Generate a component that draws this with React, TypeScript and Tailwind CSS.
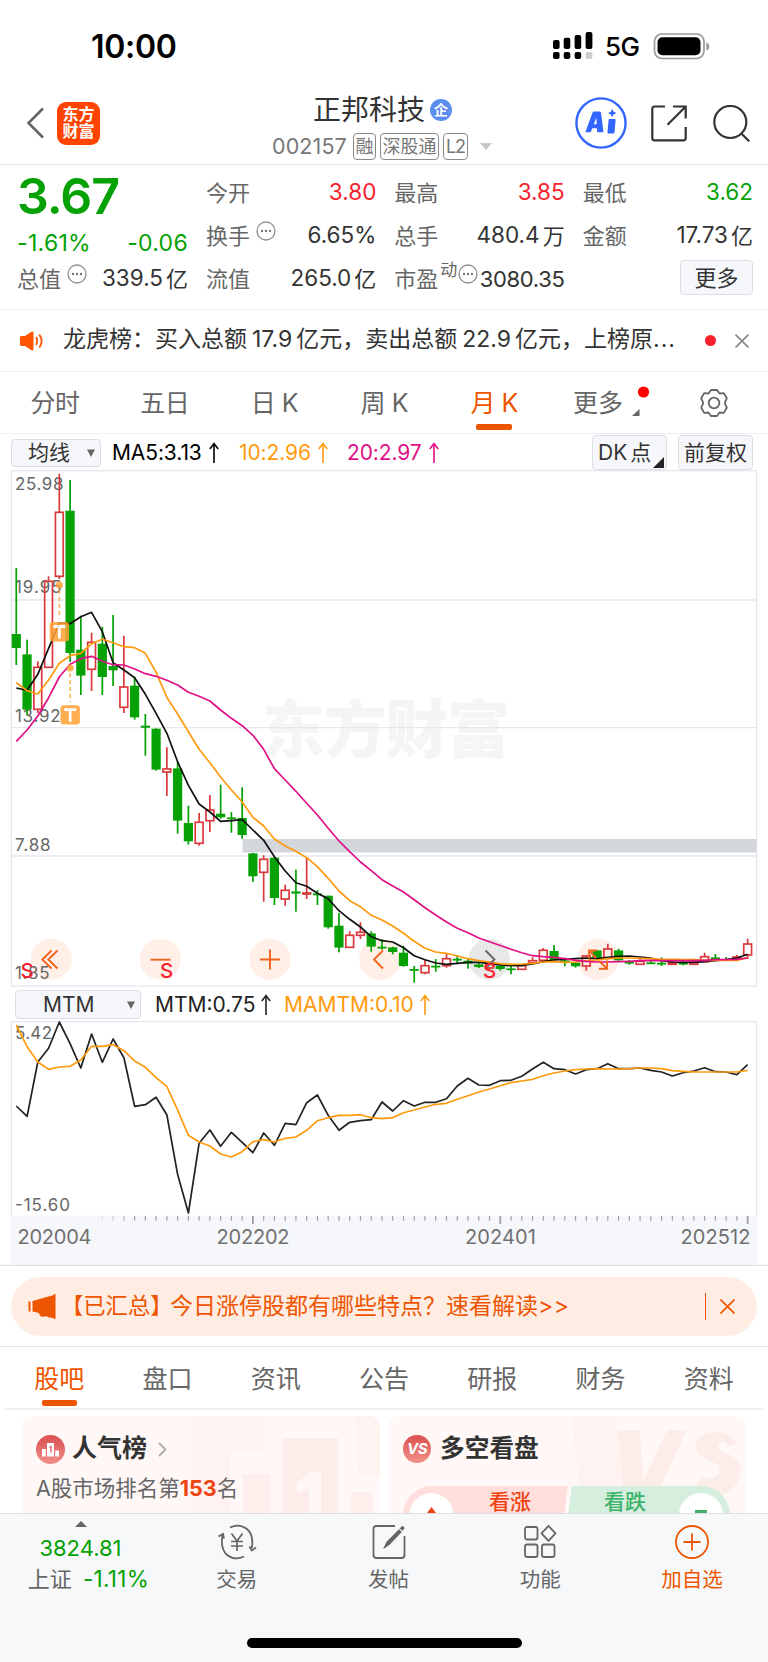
import { ReactNode } from 'react';

const STEP = 10.755;
const X0 = 16.3;
const px = (i: number) => X0 + STEP * i;

// [up, high, body top, body bottom, low]
const candles: [number, number, number, number, number][] = [
  [0, 568, 634.3, 647.7, 665], [0, 639.7, 654.7, 709.3, 715], [1, 661.3, 667.3, 709.3, 713], [1, 576.3, 581.3, 667.3, 667.3],
  [1, 473.7, 512.3, 576.3, 579], [0, 480, 511, 652.7, 662], [0, 615.7, 650, 675.3, 695], [1, 632.7, 642.3, 669.3, 691],
  [0, 626.7, 644, 676.7, 695], [0, 615, 666.3, 670, 686], [1, 635.7, 687, 707.3, 713], [0, 676.7, 686, 717, 719.7],
  [0, 714, 726, 727.5, 755.7], [0, 728.3, 729, 769.3, 770.7], [1, 747.3, 769, 772, 796], [0, 762, 768.7, 820.3, 833.7],
  [0, 805.7, 823.3, 841, 844.7], [1, 813, 822.3, 843.3, 845.7], [1, 795, 810, 820.7, 832], [0, 784.7, 814, 817, 818.7],
  [0, 812, 817.7, 818.7, 832.7], [0, 787.3, 818.3, 834.7, 838.7], [0, 853, 853.7, 876, 882], [1, 855.3, 859.3, 872.3, 901.7],
  [0, 856.7, 858, 897.7, 905], [1, 884.7, 890.3, 899, 905.7], [0, 869.7, 891.7, 893.3, 911.7], [1, 857.7, 893, 894, 899],
  [0, 890, 893.7, 895, 905], [0, 895.7, 896, 927, 928.7], [0, 913, 926, 947.3, 952.3], [1, 931.3, 935.3, 947.3, 947.3],
  [1, 922.3, 932.3, 935.3, 939], [0, 931.3, 933.7, 946.3, 951.7], [0, 939.3, 947, 948, 949.7], [0, 946.7, 947.7, 951.7, 954.3],
  [0, 945.7, 953, 965.7, 966.7], [0, 966, 969.3, 970.3, 982.7], [1, 959.7, 965.7, 972.7, 974.3], [0, 959, 966, 967, 971.7],
  [1, 953.3, 958.7, 965.7, 967.7], [0, 955, 959, 960.3, 963.3], [0, 958.5, 961, 963.3, 968.7], [0, 963, 964.7, 966.7, 968],
  [1, 961.7, 964, 968, 968.7], [0, 964.3, 966, 968.7, 970.7], [0, 966, 968.7, 969.7, 974.3], [1, 964.7, 965.7, 969.3, 970],
  [1, 957.3, 960.7, 963, 964], [1, 948, 950.3, 960.3, 961], [0, 945, 951.3, 959.7, 960.3], [0, 957.7, 960.7, 962, 966.3],
  [0, 962, 963, 966, 967.7], [1, 955.5, 956, 966, 970.7], [0, 950, 950.7, 958.7, 959.3], [1, 943.7, 949, 958, 959.3],
  [0, 948.7, 950.7, 960, 960.7], [0, 960, 962, 963.3, 964.7], [1, 958, 961.3, 964.3, 965], [0, 960.7, 962.7, 963.7, 964],
  [0, 957.3, 963, 964.3, 966], [1, 961, 962.7, 964.3, 964.3], [0, 961.3, 962.7, 964.3, 965.3], [1, 958.7, 962.3, 964.3, 964.3],
  [1, 952.7, 956.7, 961.7, 962], [0, 954, 957.7, 959, 960], [0, 957, 959.3, 960.7, 961], [1, 955, 957, 958.7, 960],
  [1, 938.7, 944, 955, 959],
];

const ma5 = [688, 690.3, 674.3, 648.3, 623, 623.7, 616.7, 612.3, 631.7, 662.7, 670, 677.7, 694.3, 713.3, 733.3, 761.7, 785.3, 804, 812, 821.3, 820.7, 819.7, 830, 840.3, 856.7, 871, 882.7, 886.3, 893.3, 898.7, 910.7, 919.3, 927, 936.7, 940.7, 942, 947.7, 955.7, 959.7, 963, 964.3, 963.3, 962.3, 962.3, 963.3, 965, 965.7, 965.3, 964, 961.7, 960, 959.3, 958.7, 958, 958.7, 957.3, 956.3, 956, 957, 958, 960.7, 962, 962.3, 962.3, 961.7, 960.7, 959.7, 958, 954.3];
const ma10 = [682.7, 690.7, 694, 680, 663.3, 655.7, 653.3, 643.7, 639.3, 642.7, 646.7, 647.7, 653.3, 672.3, 697.5, 714, 731.7, 749.3, 762.7, 777, 790, 802, 817.3, 826, 839, 846, 851.3, 857.7, 866.7, 878.3, 891, 900.7, 906.7, 915.3, 920, 926, 933.3, 941.3, 948.3, 952, 953.3, 956, 958.7, 960.7, 962, 963.7, 964.3, 964, 963.3, 962, 961.7, 962.3, 962, 960.7, 960, 958.7, 958, 958, 958.3, 958.7, 959.3, 959.3, 959.7, 959.7, 960.3, 960.3, 960.3, 960.3, 957.7];
const ma20 = [741.3, 730, 716, 697.7, 677, 664.3, 658.7, 656.3, 661.3, 664.7, 665, 669, 673.7, 676.3, 680.3, 685, 692.3, 696.3, 701, 710, 718.3, 725.7, 735.3, 749.3, 768.7, 780, 791.3, 803.3, 815, 828.3, 841, 851.7, 862, 870.7, 879.7, 886, 892, 899.7, 907.7, 915, 922, 928.3, 932.7, 938, 941.7, 945.5, 949.3, 952.7, 955.7, 956.7, 957.3, 958.7, 960.3, 961.3, 962, 962, 961.7, 961.3, 960.7, 960.3, 960.7, 960.7, 960.7, 960.7, 960.3, 959.7, 959.7, 959.3, 958];
const mtm = [1106, 1116.3, 1062, 1048.3, 1022, 1043.7, 1068, 1034, 1062.3, 1039, 1057.7, 1106.3, 1104.7, 1097.3, 1115, 1174.3, 1213, 1143.3, 1130, 1146.3, 1132.3, 1142.3, 1152.7, 1133, 1145.3, 1123.3, 1124.7, 1102.7, 1095, 1115.3, 1130.3, 1122.3, 1120.7, 1119.7, 1102, 1111, 1100.7, 1106, 1102.3, 1102.3, 1098.7, 1086, 1078.3, 1085, 1085.3, 1080.7, 1080.3, 1076.3, 1069, 1062.3, 1068.7, 1069.7, 1074, 1069.7, 1068.7, 1063.7, 1068.7, 1068.7, 1068, 1070.3, 1072, 1076, 1072.7, 1071, 1067.7, 1071.7, 1072, 1074.7, 1064.7];
const mamtm = [1025, 1046.7, 1062, 1069.3, 1067, 1066.3, 1060, 1046.3, 1046.3, 1044.7, 1050.7, 1061, 1067.3, 1077.7, 1086.7, 1110, 1135.3, 1142, 1146, 1154, 1157, 1151.7, 1141.7, 1139.7, 1142, 1138.3, 1137, 1130.3, 1120.7, 1117.7, 1115.3, 1115.3, 1114.7, 1117.7, 1118.7, 1117.7, 1112.7, 1110, 1107, 1104.3, 1103.3, 1099.3, 1095.7, 1092, 1089, 1085.7, 1082.7, 1081, 1079.3, 1075.7, 1073, 1071, 1069.7, 1069, 1068.7, 1069, 1069, 1068.7, 1068, 1068, 1068.7, 1070.7, 1071.3, 1072, 1072, 1072, 1072, 1072, 1070.3];

const Line = ({ data, color }: { data: number[]; color: string }) => (
  <polyline points={data.map((y, i) => `${px(i).toFixed(1)},${y}`).join(' ')} fill="none" stroke={color} strokeWidth="1.7" strokeLinejoin="round" />
);

const Candle = ({ i, c }: { i: number; c: [number, number, number, number, number] }) => {
  const [up, high, top, bottom, low] = c;
  const x = px(i);
  if (up) {
    const h = Math.max(bottom - top, 1);
    return (
      <g stroke="#d93a3d" strokeWidth="1.7" fill="none">
        <path d={`M${x} ${high}V${top}M${x} ${bottom}V${low}`} />
        <rect x={x - 3.9} y={top} width="7.8" height={h} />
      </g>
    );
  }
  return (
    <g fill="#05a105">
      <rect x={x - 0.85} y={high} width="1.7" height={low - high} />
      <rect x={x - 4.6} y={top - 0.3} width="9.2" height={Math.max(bottom - top + 0.6, 1.8)} />
    </g>
  );
};

const TradeMark = ({ x, y, from }: { x: number; y: number; from: number }) => (
  <g opacity="0.85">
    <circle cx={x} cy={from} r="3.5" fill="#ffa032" />
    <path d={`M${x} ${from + 5}V${y - 13}`} stroke="#ffa032" strokeWidth="1.5" strokeDasharray="4 3" />
    <rect x={x - 9.7} y={y - 9.7} width="19.4" height="19.4" rx="3" fill="#ffa032" />
    <path d={`M${x - 6} ${y - 5.2}h12M${x} ${y - 5.2}v12`} stroke="#fff" strokeWidth="2.8" />
  </g>
);

const KLineChart = () => (
  <svg width="768" height="517" viewBox="0 470 768 517" className="block shrink-0">
    <text x="262" y="752" textLength="248" fontSize="63" fontWeight="900" fill="#f5f5f6">东方财富</text>
    <g stroke="#e6e7ee" strokeWidth="1.3" fill="none">
      <rect x="11.4" y="470.7" width="745.2" height="515.3" />
      <path d="M11 600H757M11 727.7H757M11 856H757" />
    </g>
    <rect x="242.5" y="839" width="514" height="13.5" fill="#d3d7dc" />
    <g fill="#ffefe6">
      <circle cx="51.3" cy="959.3" r="20.6" />
      <circle cx="160.3" cy="959.3" r="20.6" />
      <circle cx="270" cy="959.3" r="20.6" />
      <circle cx="379.7" cy="959.3" r="20.6" />
      <circle cx="489.3" cy="959.3" r="20.6" fill="#e8e8e8" />
      <circle cx="598" cy="959.3" r="20.6" />
    </g>
    <g fontSize="17" fill="#666">
      <text x="15" y="490" textLength="48.5">25.98</text>
      <text x="15" y="593.4" textLength="46.5">19.95</text>
      <text x="15" y="722" textLength="45.5">13.92</text>
      <text x="15" y="850.8" textLength="35.5">7.88</text>
      <text x="15" y="979.3" textLength="34.5">1.85</text>
    </g>
    {candles.map((c, i) => <Candle key={i} i={i} c={c} />)}
    <Line data={ma5} color="#111" />
    <Line data={ma10} color="#ff9a0d" />
    <Line data={ma20} color="#e01087" />
    <TradeMark x={59.4} y={631.7} from={585} />
    <TradeMark x={70.2} y={714.9} from={668} />
    <g fill="none" stroke="#f0641e" strokeWidth="1.9">
      <path d="M51.5 950.5L42.3 959.5L51.5 968.5M57.5 950.5L48.3 959.5L57.5 968.5" />
      <path d="M150.5 959.7H170.5" />
      <path d="M260 959.5H280M270 949.5V969.5" />
      <path d="M383 950.5L374 959.5L383 968.5" />
      <path d="M485.5 950.5L494.5 959.5L485.5 968.5" stroke="#666" />
      <path d="M589 958.5V950.5H597M589.5 951L596 958M599 961L607 968.5M599 968.7H607V960.5" />
    </g>
    <g fontSize="20.5" fontWeight="500" fill="#f5222d">
      <text x="20.4" y="977.8">S</text>
      <text x="160" y="977.8">S</text>
      <text x="483" y="977.8">S</text>
    </g>
  </svg>
);

const MtmChart = () => (
  <svg width="768" height="245" viewBox="0 1021 768 245" className="block shrink-0">
    <path d="M11 1215.7H757V1265H11z" fill="#f6f7fa" />
    <path d="M11.4 1216V1021.6H756.6V1216" stroke="#e6e7ee" strokeWidth="1.3" fill="none" />
    <path d="M0 1265.3H768" stroke="#e3e3e6" strokeWidth="1.2" />
    {candles.map((_, i) => i > 7 && (
      <path
        key={i}
        d={`M${px(i)} 1216V${[22, 45, 68].includes(i) ? 1224 : 1220.8}`}
        stroke="#a0a0a3"
        strokeWidth={[22, 45, 68].includes(i) ? 1.8 : 1.2}
        opacity={i < 11 ? (i - 7) * 0.25 : 1}
      />
    ))}
    <g fontSize="17" fill="#666">
      <text x="15" y="1039.4" textLength="37">5.42</text>
      <text x="15" y="1211.3" textLength="55">-15.60</text>
    </g>
    <Line data={mtm} color="#222" />
    <Line data={mamtm} color="#ff9a0d" />
    <g fontSize="20" fill="#707070">
      <text x="17.5" y="1244" textLength="74">202004</text>
      <text x="216.5" y="1244" textLength="73">202202</text>
      <text x="465" y="1244" textLength="71">202401</text>
      <text x="680.5" y="1244" textLength="70">202512</text>
    </g>
  </svg>
);

const Up = () => (
  <svg width="10" height="22" viewBox="0 0 10 22" fill="none" stroke="currentColor" strokeWidth="1.6">
    <path d="M5 21V1.5M0.8 7L5 1.5L9.2 7" />
  </svg>
);

const Dots = () => (
  <svg width="20" height="20" viewBox="0 0 20 20" className="mb-[9px] shrink-0">
    <circle cx="10" cy="10" r="9" fill="none" stroke="#8f8f8f" strokeWidth="1.3" />
    <circle cx="6" cy="10" r="1.2" fill="#777" />
    <circle cx="10" cy="10" r="1.2" fill="#777" />
    <circle cx="14" cy="10" r="1.2" fill="#777" />
  </svg>
);

type StatProps = { label: string; value: string; unit?: string; tone?: string; dots?: boolean };

const Stat = ({ label, value, unit, tone = 'text-[#333]', dots }: StatProps) => (
  <div className="flex h-[43px] items-center whitespace-nowrap">
    <span className="text-[#666]">{label}</span>
    {dots && <span className="ml-1.5"><Dots /></span>}
    <span className={`ml-auto text-[22.5px] ${tone}`}>{value}</span>
    {unit && <span className="ml-[3px] text-[#333]">{unit}</span>}
  </div>
);

const StatusBar = () => (
  <div className="flex h-[82px] shrink-0 items-center pt-[9px] pl-[91px] text-black">
    <span className="mt-[2px] text-[32px] leading-none font-semibold tracking-[-0.3px]">10:00</span>
    <svg width="40" height="28" viewBox="553 32 40 28" className="ml-auto">
      <rect x="553" y="40" width="6.6" height="9" rx="2" />
      <rect x="563.7" y="37.7" width="6.6" height="11.3" rx="2" />
      <rect x="574.6" y="35" width="6.6" height="14" rx="2" />
      <rect x="585.6" y="32" width="6.8" height="17" rx="2" />
      <rect x="553" y="52" width="6.6" height="7" rx="2" />
      <rect x="563.7" y="52" width="6.6" height="7" rx="2" />
      <rect x="574.6" y="52" width="6.6" height="7" rx="2" />
      <rect x="585.6" y="52" width="6.8" height="7" rx="2" fill="#ccc" />
    </svg>
    <span className="mt-[2px] ml-3 w-[36px] text-[26px] leading-none font-medium tracking-[-0.5px]">5G</span>
    <svg width="57" height="28" viewBox="653 31 57 28" className="mr-[58px] ml-3">
      <rect x="654.5" y="33" width="49.5" height="24.5" rx="7.5" fill="none" stroke="#999" strokeWidth="1.7" />
      <rect x="657.5" y="36.3" width="43" height="18" rx="5" />
      <path d="M706.3 41.5q3 1 3 4t-3 4z" fill="#999" />
    </svg>
  </div>
);

const Header = () => (
  <div className="flex h-[83px] shrink-0 items-center border-b border-[#e3e3e6] pr-[18px] pl-[26px]">
    <svg width="18" height="32" viewBox="0 0 18 32" fill="none" stroke="#666" strokeWidth="2.6">
      <path d="M17 1.5L2.5 16L17 30.5" />
    </svg>
    <div className="ml-[13px] flex h-[43px] w-[43px] flex-col items-center justify-center rounded-[9px] bg-[#ff4400] text-[16px] leading-[17.5px] font-bold text-white">
      <span>东方</span>
      <span>财富</span>
    </div>
    <div className="mt-[7px] ml-[172px] flex w-[222px] flex-col">
      <div className="flex items-center pl-[41px]">
        <span className="text-[28px] leading-[34px] text-[#333]">正邦科技</span>
        <span className="ml-[5px] flex h-[22px] w-[22px] items-center justify-center rounded-full bg-[#5b8def] text-[14px] leading-none font-bold text-white">企</span>
      </div>
      <div className="mt-[6px] flex h-[27px] items-center text-[#777]">
        <span className="w-[81px] text-[21.5px] tracking-[0.1px]">002157</span>
        <span className="flex h-[27px] w-[23px] items-center justify-center rounded-[4px] border border-[#8a8a8a] text-[18px]">融</span>
        <span className="ml-1 flex h-[27px] w-[59px] items-center justify-center rounded-[4px] border border-[#8a8a8a] text-[18px]">深股通</span>
        <span className="ml-1 flex h-[27px] w-[25px] items-center justify-center rounded-[4px] border border-[#8a8a8a] text-[18px] tracking-[-1px]">L2</span>
        <svg width="12" height="7" viewBox="0 0 12 7" className="ml-3 shrink-0"><path d="M0 0h12L6 7z" fill="#c8c8c8" /></svg>
      </div>
    </div>
    <svg width="52" height="52" viewBox="0 0 52 52" className="ml-auto" fill="#3366ff">
      <circle cx="26" cy="26" r="24.6" fill="none" stroke="#3366ff" strokeWidth="2.4" />
      <path fillRule="evenodd" d="M10.3 35.3L17.6 15.4Q18 14.5 19 14.5H24.5Q25.8 14.5 26 15.8L28.4 34.4Q28.5 35.3 27.6 35.3H23Q22.2 35.3 22.1 34.5L21.8 31.3H17.3L16 34.5Q15.7 35.3 14.8 35.3zM18.8 27.3H21.7L21.4 20.5z" />
      <path d="M34.6 22H39.6Q40.7 22 40.6 23L39.5 35.6Q39.4 36.6 38.4 36.6H33.3Q32.4 36.6 32.5 35.6L33.6 23Q33.7 22 34.6 22z" />
      <path d="M37.2 11.8L38.6 14.7L41.5 16L38.6 17.4L37.2 20.2L35.8 17.4L33 16L35.8 14.7z" />
    </svg>
    <svg width="36" height="37" viewBox="0 0 36 37" fill="none" stroke="#333" strokeWidth="2.2" className="ml-[24px]">
      <path d="M14 1.5H3.5Q1.3 1.5 1.3 4V33Q1.3 35.3 3.5 35.3H32.5Q34.7 35.3 34.7 33V22M22 1.5H34.7V13.5M34 2.3L16.5 19.8" />
    </svg>
    <svg width="37" height="37" viewBox="0 0 37 37" fill="none" stroke="#333" strokeWidth="2.2" className="ml-[26px]">
      <circle cx="17.3" cy="17" r="16" />
      <path d="M28.8 29L36.3 36.3" />
    </svg>
  </div>
);

const Quote = () => (
  <div className="flex h-[145px] shrink-0 border-b border-[#f0f0f2] pr-[15px] pl-[17px] text-[22px] leading-none">
    <div className="mr-[18px] w-[171px]">
      <div className="mt-[6px] h-[50px] text-[50px] leading-[50px] font-semibold tracking-[-1px] text-[#05a105]">3.67</div>
      <div className="mt-[8px] flex justify-between text-[23px] text-[#05a105]">
        <span className="leading-[28px] tracking-[0.3px]">-1.61%</span>
        <span className="leading-[28px] tracking-[0.3px]">-0.06</span>
      </div>
      <Stat label="总值" value="339.5" unit="亿" dots />
    </div>
    <div className="grid flex-1 grid-cols-3 content-start gap-x-[18px] pt-[6px]">
      <Stat label="今开" value="3.80" tone="text-[#f5222d]" />
      <Stat label="最高" value="3.85" tone="text-[#f5222d]" />
      <Stat label="最低" value="3.62" tone="text-[#05a105]" />
      <Stat label="换手" value="6.65%" dots />
      <Stat label="总手" value="480.4" unit="万" />
      <Stat label="金额" value="17.73" unit="亿" />
      <Stat label="流值" value="265.0" unit="亿" />
      <div className="flex h-[43px] items-center whitespace-nowrap">
        <span className="text-[#666]">市盈</span>
        <span className="mb-[16px] ml-[2px] text-[17px] text-[#666]">动</span>
        <span className="ml-px"><Dots /></span>
        <span className="ml-auto tracking-[-0.3px] text-[#333]">3080.35</span>
      </div>
      <div className="flex h-[43px] items-center justify-end">
        <span className="mb-[2px] flex h-[35px] w-[73px] items-center justify-center rounded-[4px] border border-[#dcdde5] bg-[#f6f7fa] text-[#333]">更多</span>
      </div>
    </div>
  </div>
);

const Notice = () => (
  <div className="flex h-[62px] shrink-0 items-center border-b border-[#f3f3f5] pl-5">
    <svg width="24" height="20" viewBox="0 0 24 20">
      <path d="M0 6.5Q0 5 1.5 5H5L11.5 0.8Q13.5 0 13.5 2V18Q13.5 20 11.5 19.2L5 15H1.5Q0 15 0 13.5z" fill="#ff5500" />
      <path d="M16 6Q18.5 10 16 14M19.3 3.5Q24 10 19.3 16.5" fill="none" stroke="#ff5500" strokeWidth="1.8" />
    </svg>
    <span className="mb-[2px] ml-[19px] w-[612px] text-[23px] whitespace-nowrap text-[#333]">
      龙虎榜：买入总额<span className="mr-[4px] ml-[5px]">17.9</span>亿元，卖出总额<span className="mr-[4px] ml-[5px]">22.9</span>亿元，上榜原<span className="tracking-[1px]">...</span>
    </span>
    <span className="ml-[30px] h-[11px] w-[11px] rounded-full bg-[#f5222d]" />
    <svg width="14" height="14" viewBox="0 0 14 14" stroke="#888" strokeWidth="1.6" className="ml-[19px]"><path d="M0.5 0.5L13.5 13.5M13.5 0.5L0.5 13.5" /></svg>
  </div>
);

const periods = ['分时', '五日', '日 K', '周 K', '月 K'];

const PeriodTabs = () => (
  <div className="flex h-[62px] shrink-0 border-b border-[#f0f0f2] text-[25px] text-[#666]">
    {periods.map((p) => (
      <div key={p} className={`flex w-[109.8px] flex-col items-center whitespace-nowrap ${p === '月 K' ? 'text-[#ee5500]' : ''}`}>
        <span className="mt-[12px] h-[38px] leading-[38px] tracking-[-0.5px]">{p}</span>
        {p === '月 K' && <span className="mt-[2px] h-[6px] w-[36px] rounded-[2px] bg-[#ee5500]" />}
      </div>
    ))}
    <div className="ml-[24px] flex w-[78px]">
      <span className="mt-[12px] h-[38px] leading-[38px]">更多</span>
      <svg width="18" height="32" viewBox="0 0 18 32" className="mt-[13px] ml-[8px]">
        <circle cx="12.5" cy="7" r="5.6" fill="#ff0000" />
        <path d="M8.5 24V31H1z" fill="#666" />
      </svg>
    </div>
    <svg width="30" height="30" viewBox="0 0 30 30" fill="none" stroke="#666" strokeWidth="1.8" strokeLinejoin="round" className="mt-[16px] ml-[48px]">
      <path d="M12 2h6l2.5 3.5 4.3-.4 3 5.200L26 14.2v1.6l1.8 3.9-3 5.2-4.300-.4L18 28h-6l-2.5-3.500-4.300.4-3-5.200L4 15.8v-1.600L2.200 10.300l3-5.200 4.300.4z" />
      <circle cx="15" cy="15" r="5.3" />
    </svg>
  </div>
);

const Caret = () => (
  <svg width="8" height="8" viewBox="0 0 8 8" className="shrink-0"><path d="M0 0.5h8L4 8z" fill="#666" /></svg>
);

const MaRow = () => (
  <div className="flex h-[36px] shrink-0 items-center pt-px pl-[11px] text-[21px] whitespace-nowrap">
    <div className="flex h-[28px] w-[90px] items-center rounded-[4px] border border-[#dcdde5] bg-[#f6f7fa] pl-4 text-[#333]">
      <span className="mr-[17px]">均线</span>
      <Caret />
    </div>
    <div className="ml-[11px] flex w-[127px] items-center gap-[7px] tracking-[-0.1px] text-black"><span>MA5:3.13</span><Up /></div>
    <div className="flex w-[108px] items-center gap-[7px] tracking-[-0.1px] text-[#ff9a0d]"><span>10:2.96</span><Up /></div>
    <div className="flex items-center gap-[7px] tracking-[-0.1px] text-[#e01087]"><span>20:2.97</span><Up /></div>
    <div className="ml-auto flex h-[35px] w-[75px] items-center rounded-[4px] border border-[#dcdde5] bg-[#f6f7fa] pl-[5px] text-[#333]">
      <span>DK<span className="ml-[3px]">点</span></span>
      <svg width="11" height="11" viewBox="0 0 11 11" className="mt-[19px] ml-[2px] shrink-0"><path d="M11 0V11H0z" fill="#222" /></svg>
    </div>
    <div className="mr-[15px] ml-[11px] flex h-[35px] w-[75px] items-center justify-center rounded-[4px] border border-[#dcdde5] bg-[#f6f7fa] text-[#333]">前复权</div>
  </div>
);

const MtmRow = () => (
  <div className="flex h-[34px] shrink-0 items-center pt-px pl-[15px] text-[21px] whitespace-nowrap">
    <div className="flex h-[29px] w-[126px] items-center rounded-[4px] border border-[#dcdde5] bg-[#f6f7fa] pl-[27px] text-[#333]">
      <span className="w-[84px]">MTM</span>
      <Caret />
    </div>
    <div className="ml-[14px] flex w-[129px] items-center gap-[6px] text-[#222]"><span>MTM:0.75</span><Up /></div>
    <div className="flex items-center gap-[6px] text-[#ff9a0d]"><span>MAMTM:0.10</span><Up /></div>
  </div>
);

const Promo = () => (
  <div className="flex h-[81px] shrink-0 items-center border-b border-[#e3e3e6] px-[11px]">
    <div className="flex h-[59px] w-full items-center rounded-full bg-[#ffede4] pl-[17px] text-[23px] whitespace-nowrap text-[#ee5500]">
      <svg width="28" height="25" viewBox="0 0 28 25" fill="#ee5500">
        <path d="M0.5 7.5h2v10h-2zM4.5 7L26 1V24.5L22.5 23.5Q20 24 18.5 22Q15.5 23.5 12 22L11 19L4.5 17.5z" />
        <path d="M26 0h1.5v25H26z" />
      </svg>
      <span className="ml-[5px] w-[109px] text-[22.3px]">【已汇总】</span>
      <span>今日涨停股都有哪些特点？速看解读<span className="tracking-[0.6px]">&gt;&gt;</span></span>
      <span className="ml-auto h-[27px] w-[1.5px] bg-[#ee5500]" />
      <svg width="15" height="15" viewBox="0 0 15 15" stroke="#ee5500" strokeWidth="1.7" className="mr-[22px] ml-[14px]"><path d="M0.5 0.5L14.5 14.5M14.5 0.5L0.5 14.5" /></svg>
    </div>
  </div>
);

const sections = ['股吧', '盘口', '资讯', '公告', '研报', '财务', '资料'];

const SectionTabs = () => (
  <div className="mx-[5px] grid h-[63px] shrink-0 grid-cols-7 border-b-2 border-[#f1f1f4] text-[25px] text-[#666]">
    {sections.map((s) => (
      <div key={s} className={`flex flex-col items-center ${s === '股吧' ? 'text-[#ee5500]' : ''}`}>
        <span className="mt-[13px] h-[38px] leading-[38px]">{s}</span>
        {s === '股吧' && <span className="mt-[2px] h-[6px] w-[35px] rounded-[2px] bg-[#ee5500]" />}
      </div>
    ))}
  </div>
);

const Cards = () => (
  <div className="flex h-[103px] shrink-0 gap-2 overflow-hidden px-[22px] pt-[6px]">
    <div className="relative h-[120px] w-[358px] overflow-hidden rounded-[10px] bg-[#fff8f6] pt-[17px] pl-[14px]">
      <svg width="190" height="98" viewBox="190 1416 190 98" className="absolute top-0 right-0" fill="#fdebe8">
        <path d="M193 1416h72v35h-35v65h-37z" opacity="0.4" />
        <path d="M243 1474h27v42h-27zM351 1492h22v24h-22z" opacity="0.7" />
        <path d="M282 1438h56v78h-56z" opacity="0.85" />
        <path d="M355 1416h25v60h-22z" opacity="0.4" />
        <path d="M297 1483l14-11h10v44h-12v-28l-12 5z" fill="#fff8f6" />
      </svg>
      <div className="relative flex h-[32px] items-center">
        <svg width="29" height="29" viewBox="0 0 29 29">
          <defs>
            <linearGradient id="rank" x1="0" y1="0" x2="0" y2="1">
              <stop offset="0" stopColor="#d9504f" />
              <stop offset="1" stopColor="#f28f8a" />
            </linearGradient>
          </defs>
          <circle cx="14.5" cy="14.5" r="14.5" fill="url(#rank)" />
          <path d="M6 14h3.800v7.500H6zM11 8h7v13.500h-7zM19.200 15.500h3.800v6h-3.800z" fill="#fff" />
          <path d="M13.500 12.500l1.500-1v6" fill="none" stroke="#e0605d" strokeWidth="1.3" />
        </svg>
        <span className="ml-[7px] text-[25px] font-semibold text-[#333]">人气榜</span>
        <svg width="9" height="15" viewBox="0 0 9 15" fill="none" stroke="#aaa" strokeWidth="1.8" className="ml-[11px]"><path d="M1 1L7.5 7.5L1 14" /></svg>
      </div>
      <div className="relative mt-[7px] text-[21.5px] leading-[32px] text-[#666]">
        A股市场排名第<span className="font-bold text-[#ee4411]">153</span>名
      </div>
    </div>
    <div className="relative h-[120px] w-[358px] overflow-hidden rounded-[10px] bg-[#fff8f6] pt-[17px] pl-[15px]">
      <svg width="174" height="98" viewBox="572 1416 174 98" className="absolute top-0 right-0" fill="#fdebe8">
        <path d="M572 1416h44l6 98h-40z" opacity="0.4" />
        <path d="M618 1430h22l3 52 24-52h20l-40 84h-24zM736 1444q-5-13-22-12q-20 2-18 16q2 9 16 14q10 4 6 12q-4 7-16 3l-10 16q40 12 48-18q4-15-14-22q-11-5-7-10q5-5 9 3z" opacity="0.9" />
      </svg>
      <div className="relative flex h-[32px] items-center">
        <span className="flex h-[28px] w-[28px] items-center justify-center rounded-full bg-linear-to-b from-[#d9504f] to-[#f28f8a] text-[15px] font-bold tracking-[-0.5px] text-white italic">VS</span>
        <span className="ml-[9px] text-[24.7px] font-semibold text-[#333]">多空看盘</span>
      </div>
      <div className="relative mt-[21px] flex h-[58px] w-[327px] overflow-hidden rounded-full text-[21px] font-medium">
        <svg width="327" height="58" viewBox="0 0 327 58" className="absolute inset-0">
          <path d="M0 0H165L157 58H0z" fill="#ffdedb" />
          <path d="M169 0H327V58H161z" fill="#d6eedd" />
          <circle cx="28.5" cy="29" r="22" fill="#fff" />
          <path d="M28.5 21l6 8h-12z" fill="#ee4411" />
          <circle cx="298" cy="29" r="22" fill="#fff" />
          <path d="M292 24h12v3h-12z" fill="#3cb26a" />
        </svg>
        <span className="relative ml-[86px] leading-[32px] text-[#ee4411]">看涨</span>
        <span className="relative ml-[73px] leading-[32px] text-[#3cb26a]">看跌</span>
      </div>
    </div>
  </div>
);

const NavItem = ({ label, active, children }: { label: string; active?: boolean; children: ReactNode }) => (
  <div className={`flex w-[151.7px] flex-col items-center pt-[10px] text-[20.5px] ${active ? 'text-[#ee5500]' : 'text-[#666]'}`}>
    <svg width="40" height="36" viewBox="0 0 40 36" fill="none" stroke="currentColor" strokeWidth="1.8">{children}</svg>
    <span className="mt-[5px] leading-[30px]">{label}</span>
  </div>
);

const BottomBar = () => (
  <div className="flex h-[149px] shrink-0 flex-col border-t border-[#dedfe4] bg-[#f6f8fa]">
    <div className="flex h-[100px]">
      <div className="flex w-[161px] flex-col items-center text-[22px]">
        <svg width="12" height="6" viewBox="0 0 12 6" className="mt-[7px]"><path d="M0 6L6 0L12 6z" fill="#666" /></svg>
        <span className="mt-[6px] leading-[30px] text-[#05a105]">3824.81</span>
        <span className="ml-[16px] leading-[32px] whitespace-nowrap text-[#666]">
          上证<span className="ml-[11px] text-[22.5px] tracking-[0.3px] text-[#05a105]">-1.11%</span>
        </span>
      </div>
      <NavItem label="交易">
        <path d="M13 3.5Q22 -1 30 5Q37 11 34.8 24M27 32.5Q18 37 10 31Q3 24 5.5 11M1.5 12.5L6 9.8L7 14.5M32.5 22.5L34.8 26.5L39 23.5" />
        <path d="M14.5 9.5L20 17L25.5 9.5M20 17V27M14 17.5H26M14 22H26" strokeWidth="1.7" />
      </NavItem>
      <NavItem label="发帖">
        <path d="M26 2H7.5Q4.5 2 4.5 5V31Q4.5 34 7.5 34H32.5Q35.5 34 35.5 31V12" />
        <path d="M15.5 23.5L18 18L30 6L32 8L20 20.5zM31.5 4.5L33.5 2.5L35 4L33.5 6z" fill="currentColor" strokeWidth="1.2" />
      </NavItem>
      <NavItem label="功能">
        <rect x="5" y="3" width="12.5" height="12.5" rx="2" />
        <path d="M28.5 1.800L35.500 9.300L28.500 16.800L21.500 9.300z" strokeLinejoin="round" />
        <rect x="5" y="20.5" width="12.5" height="12.5" rx="2" />
        <rect x="22" y="20.5" width="12.5" height="12.5" rx="2" />
      </NavItem>
      <NavItem label="加自选" active>
        <circle cx="20" cy="18" r="16" />
        <path d="M20 9.5V26.5M11.5 18H28.5" />
      </NavItem>
    </div>
    <div className="mx-auto mt-[24px] h-[10px] w-[275px] rounded-full bg-black" />
  </div>
);

const App = () => (
  <div className="flex h-[1662px] w-[768px] flex-col overflow-hidden bg-white font-['Inter','Noto_Sans_CJK_SC',sans-serif]">
    <StatusBar />
    <Header />
    <Quote />
    <Notice />
    <PeriodTabs />
    <MaRow />
    <KLineChart />
    <MtmRow />
    <MtmChart />
    <Promo />
    <SectionTabs />
    <Cards />
    <BottomBar />
  </div>
);

export default App;
